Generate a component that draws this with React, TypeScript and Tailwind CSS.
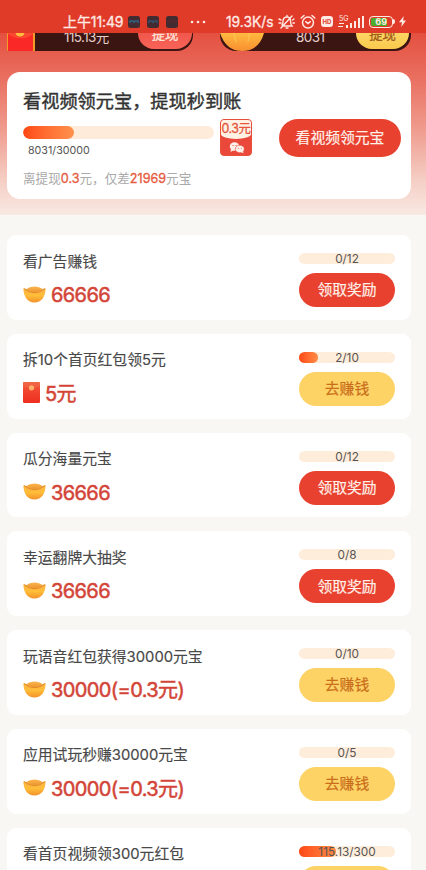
import React from 'react';

type Task = {
  title: string;
  reward: string;
  kind: 'gold' | 'packet';
  progress: string;
  percent: number;
  claim: boolean;
};

const tasks: Task[] = [
  { title: '看广告赚钱', reward: '66666', kind: 'gold', progress: '0/12', percent: 0, claim: true },
  { title: '拆10个首页红包领5元', reward: '5元', kind: 'packet', progress: '2/10', percent: 20, claim: false },
  { title: '瓜分海量元宝', reward: '36666', kind: 'gold', progress: '0/12', percent: 0, claim: true },
  { title: '幸运翻牌大抽奖', reward: '36666', kind: 'gold', progress: '0/8', percent: 0, claim: true },
  { title: '玩语音红包获得30000元宝', reward: '30000(=0.3元)', kind: 'gold', progress: '0/10', percent: 0, claim: false },
  { title: '应用试玩秒赚30000元宝', reward: '30000(=0.3元)', kind: 'gold', progress: '0/5', percent: 0, claim: false },
  { title: '看首页视频领300元红包', reward: '300元', kind: 'packet', progress: '115.13/300', percent: 38.4, claim: false },
];

function Ingot() {
  return (
    <svg width="23" height="17" viewBox="0 0 23 17" className="shrink-0">
      <defs>
        <linearGradient id="ingot" x1="0" y1="0" x2="0" y2="1">
          <stop offset="0" stopColor="#f9b347" />
          <stop offset="0.5" stopColor="#ffbd38" />
          <stop offset="1" stopColor="#f2912b" />
        </linearGradient>
        <linearGradient id="dome" x1="0" y1="0" x2="0" y2="1">
          <stop offset="0" stopColor="#fbb850" />
          <stop offset="1" stopColor="#ee9430" />
        </linearGradient>
      </defs>
      <path d="M.3 2.300Q2.500 3 4.500 3.200H18.500Q20.500 3 22.700 2.300C22.300 11 18.500 16.600 11.500 16.600S.7 11 .3 2.300Z" fill="url(#ingot)" />
      <path d="M3.500 3.200Q6.500 .4 11.500 .4T19.500 3.200Q15.500 6 11.500 6T3.500 3.200Z" fill="url(#dome)" />
      <path d="M1.500 2.900Q6 6.700 11.500 6.700T21.500 2.900" fill="none" stroke="#df8527" strokeWidth="1" strokeLinecap="round" />
    </svg>
  );
}

function Packet() {
  return (
    <svg width="17" height="21" viewBox="0 0 17 21" className="shrink-0">
      <defs>
        <linearGradient id="packet" x1="0" y1="0" x2="0" y2="1">
          <stop offset="0" stopColor="#ee6443" />
          <stop offset="0.400" stopColor="#f2472f" />
          <stop offset="1" stopColor="#ee2f20" />
        </linearGradient>
      </defs>
      <rect width="17" height="21" rx="1.200" fill="url(#packet)" />
      <path d="M0 0H17V4Q8.500 9 0 4Z" fill="#f06a48" opacity=".5" />
      <circle cx="8.500" cy="5.800" r="2.600" fill="#ffb06a" />
    </svg>
  );
}

function StatusBar() {
  return (
    <div className="flex h-[33px] shrink-0 items-center bg-[#e03a29] pl-[63px] pt-[10px] text-[#ffeae4]">
      <span className="w-[65px] whitespace-nowrap text-[14px] leading-5 tracking-[-0.1px] [-webkit-text-stroke:0.3px]">上午11:49</span>
      <div className="flex gap-[7px]">
        {['#32627e', '#35516c', '#55292c'].map((c) => (
          <svg key={c} width="12" height="12" viewBox="0 0 12 12">
            <rect width="12" height="12" rx="2.500" fill="#422b31" />
            <path d="M2 7V5H5L6 6.500L7 5H10V7" stroke={c} strokeWidth="1.500" fill="none" />
          </svg>
        ))}
      </div>
      <svg width="16" height="4" viewBox="0 0 16 4" className="ml-[12px]" fill="currentColor">
        <circle cx="2" cy="2" r="1.300" /><circle cx="8" cy="2" r="1.300" /><circle cx="14" cy="2" r="1.300" />
      </svg>
      <span className="ml-[20px] w-[52px] whitespace-nowrap text-[13.8px] leading-5 [-webkit-text-stroke:0.3px]">19.3K/s</span>
      <svg width="17" height="16" viewBox="0 0 17 16" fill="none" stroke="currentColor" strokeWidth="1.400" strokeLinecap="round">
        <path d="M4 11Q5 10 5 7Q5.500 3 8.800 3Q12.500 3 12.500 7Q12.500 10 14 12H6M9 1.500V3M8 14H10M14 2L3 14M1 5L3 6M1 9H3M14.500 6L16 5M15 9H16.500" />
      </svg>
      <svg width="16" height="16" viewBox="0 0 16 16" className="ml-[5px]" fill="none" stroke="currentColor" strokeWidth="1.500" strokeLinecap="round">
        <circle cx="8" cy="8.600" r="5.500" /><path d="M1.200 4L4 1.500M12 1.500L14.800 4M5.700 7.700L8 9.500L10.300 7.700" />
      </svg>
      <div className="ml-[5px] flex h-[11px] w-[12px] items-center justify-center rounded-[3px] bg-[#ffeae4] text-[6px] leading-none font-bold text-[#e03a29]">HD</div>
      <svg width="26" height="15" viewBox="0 0 26 15" className="ml-[5px]" fill="currentColor">
        <text x="1" y="6.500" fontSize="7">5G</text>
        <path d="M1 9H6V10H1ZM0 12H5V13H0ZM8 11h2v3H8ZM12 9h2v5h-2ZM16 7h2v7h-2ZM20 4h2v10h-2ZM24 2h2v12h-2Z" />
      </svg>
      <div className="ml-[5px] flex h-[12px] w-[24px] items-center rounded-[4px] border border-[#ffeae4] p-px">
        <div className="flex h-full w-[16px] items-center justify-end rounded-l-[2px] bg-[#4cad2d] text-[9px] font-bold leading-none"><span>69</span></div>
      </div>
      <div className="h-[5px] w-[2px] rounded-r bg-[#ffeae4]" />
      <svg width="7" height="11" viewBox="0 0 7 11" className="ml-[4px]" fill="currentColor"><path d="M4.800 0L0 6.200H3L2.200 11L7 4.500H4Z" /></svg>
    </div>
  );
}

function Balances() {
  return (
    <div className="flex h-[39px] shrink-0 items-start gap-[27px] overflow-hidden pl-[7px]">
      <div className="flex h-[18px] w-[186px] items-end overflow-hidden rounded-br-[16px] bg-[#3b1512]">
        <svg width="28" height="20" viewBox="0 0 28 20" className="-mb-[2px] shrink-0">
          <rect width="28" height="20" y="-1" rx="2" fill="#f49a27" />
          <rect x="1" y="-2" width="25" height="21" rx="2" fill="#fb2828" />
          <path d="M1 0H26V1Q13.500 10 1 1Z" fill="#fb4730" /><circle cx="13" cy="-1" r="4.500" fill="#ffbd3d" />
        </svg>
        <span className="ml-[29px] w-[74px] pb-[5px] text-[13.500px] leading-[18px] tracking-[-0.600px] text-[#e5cfca]">115.13元</span>
        <div className="mb-[2px] flex h-[32px] w-[54px] shrink-0 items-end justify-center rounded-full bg-[linear-gradient(#e84b42,#f96357)] pb-[7px] text-[13.300px] leading-[16px] text-[#ffe4d9] [-webkit-text-stroke:0.3px]">提现</div>
      </div>
      <div className="flex h-[18px] w-[191px] items-end overflow-hidden rounded-br-[16px] rounded-bl-[16px] bg-[#3b1512]">
        <svg width="44" height="18" viewBox="0 0 44 18" className="shrink-0">
          <defs><linearGradient id="coin" x1="0" y1="0" x2="0" y2="1"><stop stopColor="#ffb93f" /><stop offset="1" stopColor="#f98f31" /></linearGradient></defs>
          <path d="M0 0H44Q39 18 22 18Q6 18 0 0Z" fill="url(#coin)" />
          <path d="M14 0Q15 6 16 9M29 0Q29 6 28 9" stroke="#ffcf62" strokeWidth="1.500" opacity=".5" fill="none" />
        </svg>
        <span className="ml-[32px] w-[60px] pb-[5px] text-[13.500px] leading-[18px] tracking-[-0.600px] text-[#e5cfca]">8031</span>
        <div className="mb-[2px] flex h-[32px] w-[53px] shrink-0 items-end justify-center rounded-full bg-[linear-gradient(#ffe27a,#fbc94d)] pb-[7px] text-[13.300px] leading-[16px] text-[#a05a19] [-webkit-text-stroke:0.3px]">提现</div>
      </div>
    </div>
  );
}

function WithdrawCard() {
  return (
    <section className="ml-[7px] flex h-[127px] w-[404px] shrink-0 rounded-[13px] bg-white pl-4">
      <div className="w-[256px]">
        <h1 className="mt-[17px] whitespace-nowrap text-[18.2px] leading-6 text-[#333] [-webkit-text-stroke:0.4px]">看视频领元宝，提现秒到账</h1>
        <div className="mt-[6px] flex">
          <div className="w-[191px] pt-[7px]">
            <div className="h-[13px] overflow-hidden rounded-full bg-[#ffebd9]">
              <div className="h-full w-[51px] rounded-full bg-linear-to-r from-[#ff4713] to-[#ff914c]" />
            </div>
            <p className="ml-[5px] mt-[4px] text-[10.700px] leading-4 text-[#555]">8031/30000</p>
          </div>
          <div className="ml-[6px] h-[37px] w-[32px] shrink-0 overflow-hidden rounded-[4px] border border-[#e8503c] bg-[#e9483a]">
            <div className="flex h-[19px] items-center justify-center rounded-b-[50%_5px] bg-[#fff2e5] text-[12.400px] tracking-[-0.4px] whitespace-nowrap text-[#e5573f] [-webkit-text-stroke:0.3px]">0.3元</div>
            <svg width="30" height="16" viewBox="0 0 30 16">
              <g fill="#fff0e8"><ellipse cx="13.500" cy="7.500" rx="4.700" ry="4.200" /><path d="M10 10L9.500 13L13 11Z" /><ellipse cx="18.800" cy="10" rx="4.500" ry="3.800" stroke="#e9483a" strokeWidth=".6" /><path d="M20 13L22.500 14.500L22 12Z" /></g>
              <g fill="#e9483a"><circle cx="12" cy="6.500" r=".6" /><circle cx="15" cy="6.500" r=".6" /><circle cx="17.300" cy="9.200" r=".5" /><circle cx="20.300" cy="9.200" r=".5" /></g>
            </svg>
          </div>
        </div>
        <p className="mt-[10px] whitespace-nowrap text-[12.600px] leading-5 text-[#aaa]">
          离提现<span className="text-[#e65a3d] [-webkit-text-stroke:0.3px]">0.3</span>元，仅差<span className="text-[#e65a3d] [-webkit-text-stroke:0.3px]">21969</span>元宝
        </p>
      </div>
      <button className="mt-[47px] h-[38px] w-[122px] rounded-full bg-[#e8412f] pt-px text-[14.800px] whitespace-nowrap text-[#fff0e8] [-webkit-text-stroke:0.2px]">看视频领元宝</button>
    </section>
  );
}

function TaskCard({ task }: { task: Task }) {
  return (
    <li className="flex h-[84.75px] w-[404px] shrink-0 justify-between rounded-[9px] bg-white pr-4 pl-4">
      <div className="whitespace-nowrap">
        <h2 className="mt-[15.500px] text-[14.800px] leading-[22px] text-[#484848] [-webkit-text-stroke:0.150px]">{task.title}</h2>
        <div className="mt-[7.500px] flex h-[28px] items-center text-[20px] leading-7 tracking-[-0.600px] text-[#d34437] [-webkit-text-stroke:0.500px]">
          {task.kind === 'gold' ? <Ingot /> : <Packet />}
          <span className="ml-[5px] pt-[2px]">{task.reward}</span>
        </div>
      </div>
      <div className="w-[96px] pt-[18px]">
        <div className="grid h-[11px] items-center overflow-visible rounded-full bg-[#ffeddc]">
          <div className="col-start-1 row-start-1 h-[11px] rounded-full bg-linear-to-r from-[#ff4713] to-[#ff8a45]" style={{ width: `${task.percent}%` }} />
          <span className="col-start-1 row-start-1 pt-px text-center text-[11.800px] leading-[11px] text-[#555]">{task.progress}</span>
        </div>
        <button className={`mt-[9px] block h-[34px] w-full rounded-full pt-px text-[14.800px] [-webkit-text-stroke:0.2px] ${task.claim ? 'bg-[#e8412f] text-[#fff0e8]' : 'bg-[#fdd365] text-[#ca6d1b]'}`}>
          {task.claim ? '领取奖励' : '去赚钱'}
        </button>
      </div>
    </li>
  );
}

export default function App() {
  return (
    <main className="h-[870px] w-[426px] overflow-hidden bg-[#f8f7f4] font-[Inter,'Noto_Sans_CJK_SC',sans-serif]">
      <header className="flex h-[215px] flex-col bg-[linear-gradient(180deg,#e45040_33px,#e96d5e_75px,#ef9c8f_130px,#f5cec4_180px,#f8e9e3_215px)]">
        <StatusBar />
        <Balances />
        <WithdrawCard />
      </header>
      <ul className="ml-[7px] flex flex-col gap-[14px] pt-[20px]">
        {tasks.map((task) => <TaskCard key={task.title} task={task} />)}
      </ul>
    </main>
  );
}
